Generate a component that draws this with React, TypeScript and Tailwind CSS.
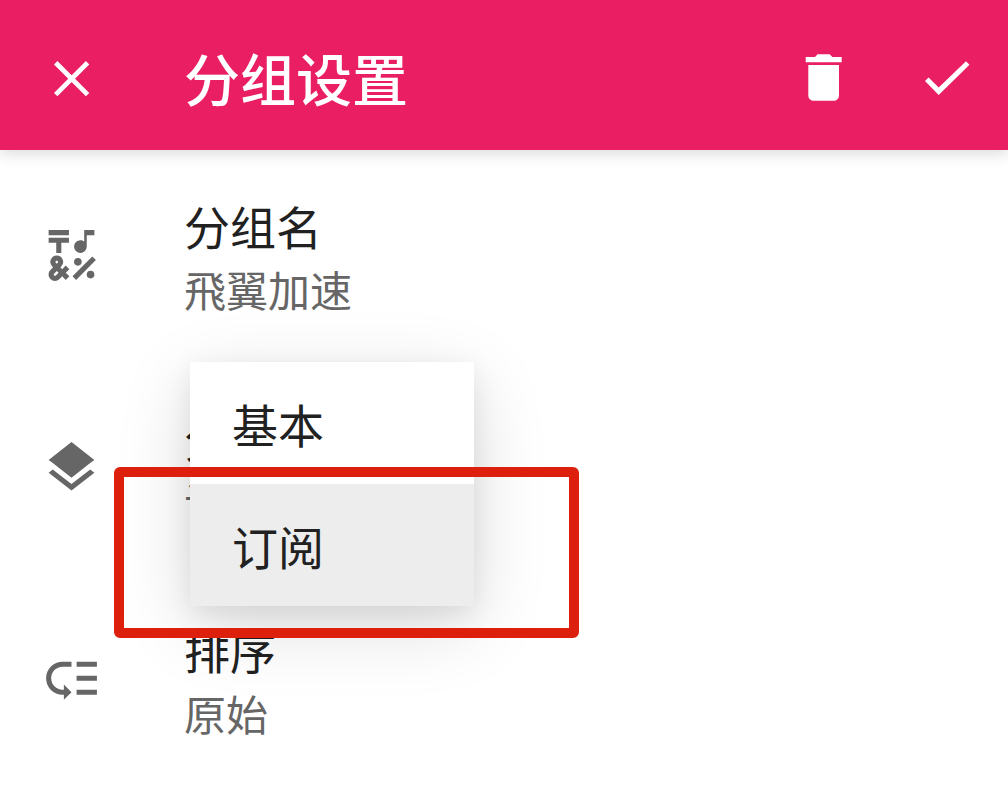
import React from 'react';
import { MdEmojiSymbols, MdLayers, MdLowPriority } from 'react-icons/md';
import type { IconType } from 'react-icons';

interface SettingRowProps {
  icon: IconType;
  title: string;
  value: string;
  children?: React.ReactNode;
}

const typeOptions = ['基本', '订阅'];
const selectedType = '订阅';

function CloseIcon() {
  return (
    <svg className="w-[61px] h-[61px]" viewBox="0 0 61 61" fill="none" stroke="currentColor" strokeWidth="4.8" aria-hidden="true">
      <path d="M14.7 14.7 46.6 46.6M46.6 14.7 14.7 46.6" />
    </svg>
  );
}

function TrashIcon() {
  return (
    <svg className="w-[61px] h-[61px]" viewBox="0 0 61 61" fill="currentColor" aria-hidden="true">
      <path d="M12.7 9H22l2.6-2.8h12L39.4 9h9.3v5.2h-36zM15.3 17H46v30.4a5.3 5.3 0 0 1-5.3 5.3H20.6a5.3 5.3 0 0 1-5.3-5.3z" />
    </svg>
  );
}

function CheckIcon() {
  return (
    <svg className="w-[61px] h-[61px]" viewBox="0 0 61 61" fill="currentColor" aria-hidden="true">
      <path d="M9 33l3.6-3.6 10.1 10.1L50 13.2l3.5 3.5L22.7 47.1z" />
    </svg>
  );
}

function SettingRow({ icon: Icon, title, value, children }: SettingRowProps) {
  return (
    <li className="relative flex items-center min-h-[212px] pb-px pl-[41px] pr-[31px] gap-[82px]">
      <Icon className="w-[61px] h-[61px] shrink-0 text-[#666666]" aria-hidden="true" />
      <div>
        <div className="text-[46px] leading-[66px] text-[#212121]">{title}</div>
        <div className="text-[42px] leading-[62px] text-[#666666]">{value}</div>
      </div>
      {children}
    </li>
  );
}

export default function GroupSettings() {
  return (
    <div className="min-h-screen bg-white font-['Noto_Sans_CJK_SC',sans-serif]">
      {/* App bar */}
      <header className="relative z-10 flex items-center min-h-[150px] pt-[7px] pl-[41px] pr-[31px] bg-[#e91e63] text-white shadow-[0_4px_14px_rgba(0,0,0,0.14)]">
        <button type="button" aria-label="关闭">
          <CloseIcon />
        </button>
        <h1 className="flex-1 ml-[82px] pb-1 text-[56px] leading-[80px] font-medium">分组设置</h1>
        <div className="flex gap-[62px]">
          <button type="button" aria-label="删除">
            <TrashIcon />
          </button>
          <button type="button" aria-label="确定">
            <CheckIcon />
          </button>
        </div>
      </header>

      {/* Settings */}
      <ul>
        <SettingRow icon={MdEmojiSymbols} title="分组名" value="飛翼加速" />
        <SettingRow icon={MdLayers} title="分组类型" value={selectedType}>
          <div
            role="listbox"
            aria-label="分组类型"
            className="absolute z-10 top-0 left-[190px] w-[284px] bg-white shadow-[0_20px_70px_rgba(0,0,0,0.14),0_8px_24px_rgba(0,0,0,0.08)]"
          >
            {typeOptions.map((option) => (
              <button
                key={option}
                type="button"
                role="option"
                aria-selected={option === selectedType}
                className="block w-full h-[122px] px-[42px] text-left text-[46px] text-[#212121] aria-selected:bg-[#ededed]"
              >
                {option}
              </button>
            ))}
          </div>
          {/* Highlight frame around the subscription option */}
          <div className="absolute z-20 top-[105px] left-[114px] w-[465px] h-[171px] border-10 border-[#dc200d] rounded-md pointer-events-none" />
        </SettingRow>
        <SettingRow icon={MdLowPriority} title="排序" value="原始" />
      </ul>
    </div>
  );
}
